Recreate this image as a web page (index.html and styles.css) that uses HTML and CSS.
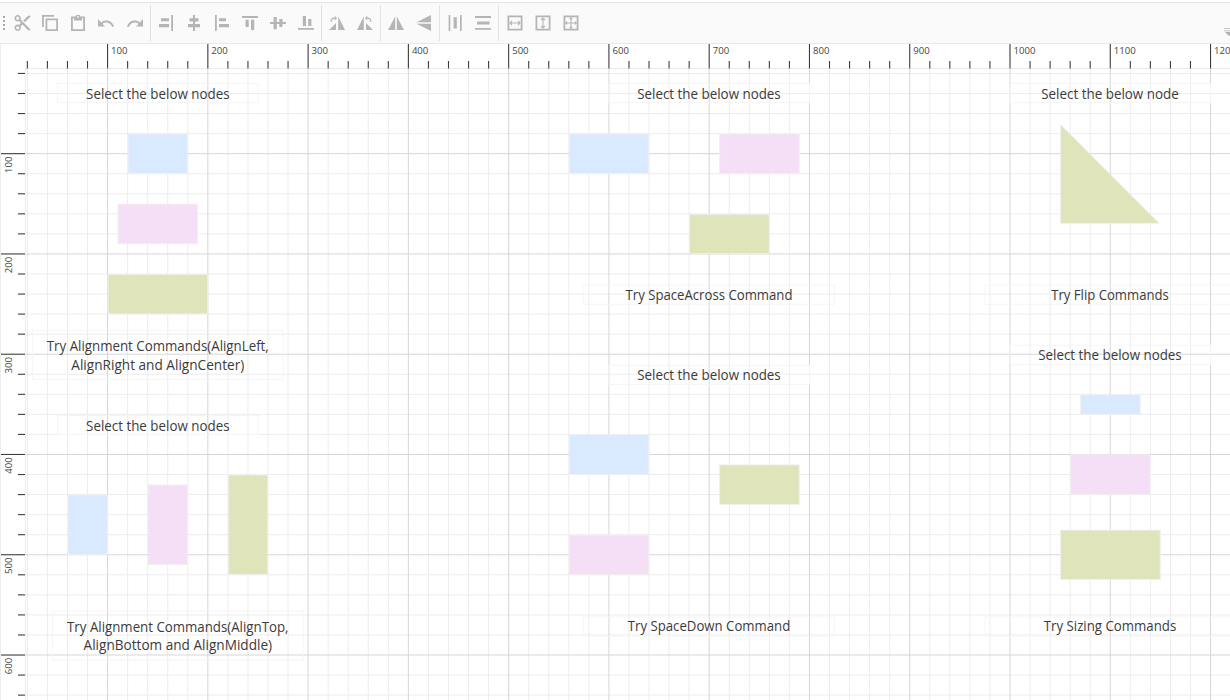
FILE: index.html
```html
<!DOCTYPE html>
<html lang="en">
<head>
<meta charset="utf-8">
<title>Diagram commands</title>
<link rel="stylesheet" href="styles.css">
</head>
<body>
<div class="app">
<div class="toolbar">
  <div class="grip"><i></i><i></i><i></i><i></i></div>
  <div class="group">
    <button class="tool" aria-label="Cut"><svg class="cut" viewBox="2 2 20 20"><path d="M9.64 7.64c.23-.5.36-1.05.36-1.64 0-2.21-1.79-4-4-4S2 3.790 2 6s1.790 4 4 4c.59 0 1.140-.13 1.640-.36L10 12l-2.360 2.360C7.140 14.130 6.590 14 6 14c-2.210 0-4 1.790-4 4s1.790 4 4 4 4-1.790 4-4c0-.59-.13-1.140-.36-1.640L12 14l7 7h3v-1L9.640 7.640zM6 8c-1.100 0-2-.9-2-2s.9-2 2-2 2 .9 2 2-.9 2-2 2zm0 12c-1.100 0-2-.9-2-2s.9-2 2-2 2 .9 2 2-.9 2-2 2zM19 3l-6 6 2 2 7-7V3h-3z"/></svg></button>
    <button class="tool" aria-label="Copy"><svg viewBox="0 0 16 16"><path d="M0 0h12v1.800H1.800V12H0zM3.500 3.500H16V16H3.500zM5.300 5.300v8.900h8.900V5.300z" fill-rule="evenodd"/></svg></button>
    <button class="tool" aria-label="Paste"><svg viewBox="0 0 16 16"><path d="M1 1.500h4.500a2.600 2.600 0 0 1 5 0H15V16H1zM2.800 3.300v10.900h10.400V3.300H12v2.200H4V3.300zM8 1a.9.9 0 1 0 0 1.800A.9.9 0 0 0 8 1z" fill-rule="evenodd"/></svg></button>
    <button class="tool" aria-label="Undo"><svg viewBox="0 0 16 16"><path d="M0 4v7.500h7L4.500 8.900C7.500 6.500 12.300 7.200 14.200 12l1.800-.6C13.700 5 7.300 4.200 3.200 7.400z"/></svg></button>
    <button class="tool" aria-label="Redo"><svg viewBox="0 0 16 16"><path d="M16 4v7.500H9l2.500-2.600C8.500 6.500 3.700 7.200 1.800 12L0 11.400C2.300 5 8.700 4.200 12.800 7.400z"/></svg></button>
  </div>
  <span class="sep"></span>
  <div class="group">
    <button class="tool" aria-label="Align right"><svg viewBox="0 0 16 16"><path d="M13.200 0h1.800v16h-1.800zM3 3.200h8v3.100H3zM1 9h10v3.200H1z"/></svg></button>
    <button class="tool" aria-label="Align center"><svg viewBox="0 0 16 16"><path d="M7 0h2v3.300h3.500v3.100H9v2.700h5v3.200H9V16H7v-3.700H2V9.100h5V6.400H3.500V3.300H7z"/></svg></button>
    <button class="tool" aria-label="Align left"><svg viewBox="0 0 16 16"><path d="M1 0h1.800v16H1zM5 3.200h7v3.100H5zM5 9h10v3.200H5z"/></svg></button>
    <button class="tool" aria-label="Align top"><svg viewBox="0 0 16 16"><path d="M0 1h16v1.900H0zM3.500 4.700h3.200v7.300H3.500zM9 4.700h3.200V15H9z"/></svg></button>
    <button class="tool" aria-label="Align middle"><svg viewBox="0 0 16 16"><path d="M0 7h3.600V2h3.200v5h2.500V4h3.200v3H16v2h-3.500v3H9.300V9H6.800v5.300H3.600V9H0z"/></svg></button>
    <button class="tool" aria-label="Align bottom"><svg viewBox="0 0 16 16"><path d="M0 12.900h16v1.900H0zM4.800 1H8v10H4.800zM10.200 4h3.200v7h-3.200z"/></svg></button>
  </div>
  <span class="sep"></span>
  <div class="group">
    <button class="tool" aria-label="Rotate right"><svg viewBox="0 0 16 16"><path d="M9.200 1.500 16 15H9.200zM7 8v7H0zM1.600 6.500l1 .4C3 4 4.500 3.400 5.700 3.700v1.700L8 3 5.700.8v1.700C3.500 2.200 1.600 3.700 1.600 6.500z"/></svg></button>
    <button class="tool" aria-label="Rotate left"><svg viewBox="0 0 16 16"><path d="M6.800 1.500V15H0zM9 8v7h7zM14.400 6.500l-1 .4C13 4 11.500 3.400 10.300 3.700v1.700L8 3 10.300.8v1.700c2.200-.3 4.100 1.200 4.100 4z"/></svg></button>
  </div>
  <span class="sep"></span>
  <div class="group">
    <button class="tool" aria-label="Flip horizontal"><svg viewBox="0 0 16 16"><path d="M7.200 1.500V15H0zM8.800 1.500V15H16z"/></svg></button>
    <button class="tool" aria-label="Flip vertical"><svg viewBox="0 0 16 16"><path d="M15 0v7.200H.5zM15 8.800V16L.5 8.800z"/></svg></button>
  </div>
  <span class="sep"></span>
  <div class="group">
    <button class="tool" aria-label="Distribute horizontally"><svg viewBox="0 0 16 16"><path d="M1.600 0h1.700v16H1.600zM13 0h1.700v16H13zM6.600 2.200h3.200v11.300H6.600z"/></svg></button>
    <button class="tool" aria-label="Distribute vertically"><svg viewBox="0 0 16 16"><path d="M0 1h16.500v1.900H0zM0 12.900h16.500v1.900H0zM2 6.500h12.500v3H2z"/></svg></button>
  </div>
  <span class="sep"></span>
  <div class="group last">
    <button class="tool" aria-label="Same width"><svg viewBox="0 0 16 16"><path d="M1.400 1.400h13.200v13.200H1.400z" class="frame"/><path d="M3 8h10M5 6 3 8l2 2M11 6l2 2-2 2" class="thin"/></svg></button>
    <button class="tool" aria-label="Same height"><svg viewBox="0 0 16 16"><path d="M1.400 1.400h13.200v13.200H1.400z" class="frame"/><path d="M8 3v10M6 5l2-2 2 2M6 11l2 2 2-2" class="thin"/></svg></button>
    <button class="tool" aria-label="Same size"><svg viewBox="0 0 16 16"><path d="M1.400 1.400h13.200v13.200H1.400z" class="frame"/><path d="M8 2.500v11M2.500 8h11M6.700 4 8 2.700 9.300 4M6.700 12 8 13.300 9.300 12M4 6.700 2.700 8 4 9.300M12 6.700 13.300 8 12 9.300" class="thin"/></svg></button>
  </div>
  <svg class="overflow" viewBox="0 0 10 8"><path d="M0 .5h10M0 2.800h10"/><path d="M1 4h8L5 8z" class="arrow"/></svg>
</div>
<svg class="diagram" id="diagram" width="1230" height="656" viewBox="0 44 1230 656">
  <g id="grid"></g>
  <g id="nodes"></g>
  <g id="rulers"></g>
</svg>
</div>
<script src="diagram.js"></script>
</body>
</html>
```
FILE: styles.css
```css
* { box-sizing: border-box; }
body { margin: 0; background: #fff; overflow: hidden; }
.app { display: flex; flex-direction: column; width: 1230px; height: 700px; padding-top: 2px; }
.toolbar { display: flex; align-items: center; height: 42px; flex: none; background: #fafafa; border-top: 1px solid #e6e6e6; border-bottom: 1px solid #e9e9e9; }
.grip { display: flex; flex-direction: column; gap: 2px; width: 8px; padding-left: 3px; }
.grip i { width: 2px; height: 2px; background: #aaa; }
.group { display: flex; }
.last { padding-left: .5px; }
.tool { display: flex; align-items: center; justify-content: center; width: 28.15px; height: 30px; padding: 0; border: 0; background: none; }
.tool svg { width: 16px; height: 16px; fill: #b5b5b5; display: block; }
.tool .cut { width: 17px; height: 16px; }
.tool .frame { fill: none; stroke: #b5b5b5; stroke-width: 1.800; }
.tool .thin { fill: none; stroke: #b5b5b5; stroke-width: 1.100; }
.sep { width: 1px; height: 36px; margin: 0 .75px 0 1px; background: #e2e2e2; }
.overflow { width: 10px; height: 8px; margin: 17px -4px 0 auto; fill: #b0b0b0; stroke: #c4c4c4; stroke-width: 1; }
.overflow .arrow { stroke: none; }
.diagram { display: block; flex: none; }
.minor { stroke: #ededed; stroke-width: 1; }
.major { stroke: #d6d6d6; stroke-width: 1; }
.ruler-bg { fill: #fff; }
.ruler-edge { stroke: #ececec; stroke-width: 1; }
.tick { stroke: #3c3c3c; stroke-width: 1.1; }
.ruler-text { font: 9.6px "Open Sans", "Noto Sans", sans-serif; fill: #444; }
.node { stroke: #f0f0f0; stroke-width: 1; }
.blue { fill: #d9e9ff; }
.pink { fill: #f4dff6; }
.green { fill: #dfe4bb; }
.label-box { fill: none; stroke: #f5f5f5; stroke-width: 1; }
.label { font: 14px "Open Sans", "Noto Sans", sans-serif; fill: #3b3b3b; text-anchor: middle; }
```
FILE: diagram.js
```js
const NS = 'http://www.w3.org/2000/svg';
const ZOOM = 1.0027, OX = 7.3, OY = 53.2;
const px = v => OX + v * ZOOM;
const py = v => OY + v * ZOOM;

function add(parent, name, attrs, text) {
  const el = document.createElementNS(NS, name);
  for (const key in attrs) el.setAttribute(key, attrs[key]);
  if (text) el.textContent = text;
  document.getElementById(parent).appendChild(el);
}
function line(parent, cls, x1, y1, x2, y2) {
  add(parent, 'line', { class: cls, x1, y1, x2, y2 });
}

// Minor lines every 20 units, major lines every 100
for (const major of [false, true]) {
  const cls = major ? 'major' : 'minor';
  for (let v = 20; v <= 1220; v += 20) {
    if ((v % 100 === 0) !== major) continue;
    line('grid', cls, px(v), 69, px(v), 700);
    if (v <= 640) line('grid', cls, 25, py(v) + .2, 1230, py(v) + .2);
  }
}

// x, y, width, height, colour in diagram units
[
  [120, 80, 60, 40, 'blue'], [110, 150, 80, 40, 'pink'], [100, 220, 100, 40, 'green'],
  [60, 440, 40, 60, 'blue'], [140, 430, 40, 80, 'pink'], [220, 420, 40, 100, 'green'],
  [560, 80, 80, 40, 'blue'], [710, 80, 80, 40, 'pink'], [680, 160, 80, 40, 'green'],
  [560, 380, 80, 40, 'blue'], [710, 410, 80, 40, 'green'], [560, 480, 80, 40, 'pink'],
  [1070, 340, 60, 20, 'blue'], [1060, 400, 80, 40, 'pink'], [1050, 475, 100, 50, 'green']
].forEach(([x, y, w, h, c]) => add('nodes', 'rect', {
  class: 'node ' + c, x: px(x) + .4, y: py(y) + .6, width: w * ZOOM - .6, height: h * ZOOM - .6
}));
add('nodes', 'path', { class: 'node green', d: 'M1060.500 124.500V223.300H1159z' });

// box x, y, width, height; then [text, centre x, baseline, text width] per line
[
  [50, 30, 200, 19, ['Select the below nodes', 157.8, 99, 143.500]],
  [25, 276, 250, 49, ['Try Alignment Commands(AlignLeft,', 157.8, 351, 222], ['AlignRight and AlignCenter)', 157.8, 370, 173]],
  [50, 361, 200, 19, ['Select the below nodes', 157.8, 430.5, 143.500]],
  [45, 556, 250, 49, ['Try Alignment Commands(AlignTop,', 177.8, 632, 221.500], ['AlignBottom and AlignMiddle)', 177.8, 650, 188.500]],
  [600, 30, 200, 19, ['Select the below nodes', 709, 99, 143.500]],
  [575, 231, 250, 19, ['Try SpaceAcross Command', 709, 300, 167]],
  [600, 311, 200, 19, ['Select the below nodes', 709, 380, 143.500]],
  [575, 562, 250, 19, ['Try SpaceDown Command', 709, 631, 162.500]],
  [1000, 30, 200, 19, ['Select the below node', 1110, 99, 137.500]],
  [975, 231, 250, 19, ['Try Flip Commands', 1110, 300, 117.500]],
  [1000, 291, 200, 19, ['Select the below nodes', 1110, 360, 143.500]],
  [975, 562, 250, 19, ['Try Sizing Commands', 1110, 631, 132.500]]
].forEach(([x, y, w, h, ...lines]) => {
  add('nodes', 'rect', { class: 'label-box', x: px(x), y: py(y) + .3, width: w * ZOOM, height: h * ZOOM });
  lines.forEach(([text, cx, base, len]) => add('nodes', 'text', {
    class: 'label', x: cx, y: base, textLength: len, lengthAdjust: 'spacingAndGlyphs'
  }, text));
});

// Rulers
add('rulers', 'rect', { class: 'ruler-bg', x: 0, y: 44, width: 1230, height: 25 });
add('rulers', 'rect', { class: 'ruler-bg', x: 0, y: 44, width: 25, height: 656 });
line('rulers', 'ruler-edge', 25, 68.5, 1230, 68.5);
line('rulers', 'ruler-edge', 25.5, 69, 25.5, 700);
line('rulers', 'ruler-edge', .5, 44, .5, 700);
for (let v = 20; v <= 1220; v += 20) {
  const big = v % 100 === 0;
  line('rulers', 'tick', px(v), big ? 44 : 61, px(v), 68.5);
  if (big) add('rulers', 'text', { class: 'ruler-text', x: px(v) + 3.5, y: 54 }, String(v));
  if (v <= 640) {
    line('rulers', 'tick', big ? 1 : 18, py(v) + .2, 25, py(v) + .2);
    if (big) add('rulers', 'text', {
      class: 'ruler-text', transform: `translate(11.500 ${py(v) + 19.5}) rotate(-90)`
    }, String(v));
  }
}
```
